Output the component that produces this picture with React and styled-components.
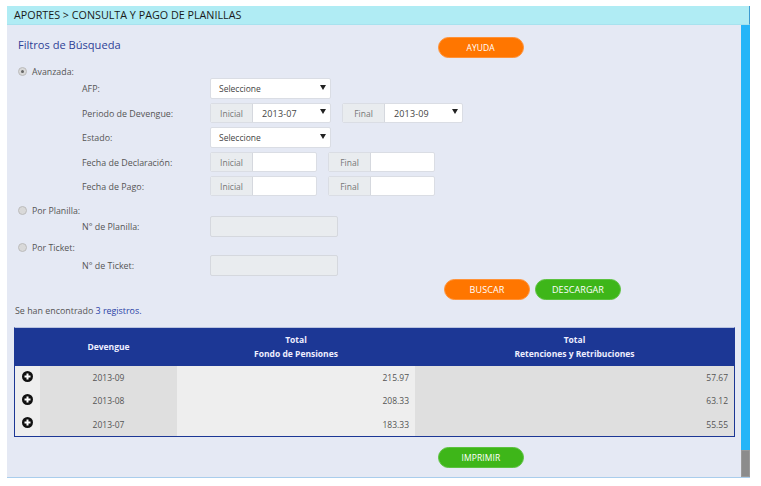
import React from "react";
import styled, { createGlobalStyle } from "styled-components";

const Global = createGlobalStyle`
  html, body { margin: 0; padding: 0; background: #fff; }
  body { font-family: "Open Sans", "Noto Sans", sans-serif; font-size: 9px; color: #444; }
  * { box-sizing: border-box; }
`;

const Page = styled.div`
  width: 761px; height: 486px; padding: 6px 11px 8px 7px;
`;
const Panel = styled.div`
  width: 743px; height: 472px; display: flex; flex-direction: column;
  border-bottom: 1px solid #a9cdec; background: #e5e9f4;
`;
const TopBar = styled.div`
  height: 19px; flex: none; background: #b0ecf4; color: #1a1a1a;
  font-size: 10.75px; line-height: 19px; padding-left: 7px;
  border-right: 1px solid #3d9ad1; border-bottom: 1px solid #a7e2ee;
`;
const Body = styled.div`
  flex: 1; display: flex; min-height: 0;
`;
const Content = styled.div`
  flex: 1; min-width: 0; padding: 0 0 0 7px; display: flex; flex-direction: column;
`;
const ScrollBar = styled.div`
  width: 9px; flex: none; display: flex; flex-direction: column;
  background: #25b5f8;
`;
const ScrollThumb = styled.div`
  margin-top: auto; height: 27px; background: #8c8c8c;
  border: 1px solid #9a9a9a;
`;
const TitleRow = styled.div`
  height: 32px; display: flex;
`;
const Title = styled.h2`
  margin: 0; padding: 12px 0 0 4px; font-weight: 400; font-size: 11.1px; line-height: 15px; color: #2e3f96;
`;
const Pill = styled.button`
  width: 86px; height: 21px; border-radius: 11px; padding: 0; font: inherit;
  font-size: 8.5px; color: #fff; letter-spacing: .1px;
  background: ${p => (p.$green ? "#3eb619" : "#ff7600")};
  border: 1px solid ${p => (p.$green ? "#5cc23f" : "#ff9238")};
`;
const HelpPill = styled(Pill)`
  margin: 12px 0 0 ${p => p.$left}px;
`;
const ActionPill = styled(Pill)`
  font-size: 9px;
`;
const RadioRow = styled.div`
  height: 12px; display: flex; align-items: center; gap: 5px; padding-left: 4px;
  margin-top: ${p => p.$mt || 0}px; font-size: 8.8px; color: #555;
`;
const RadioText = styled.span`
  padding-top: 2px;
`;
const Radio = styled.span`
  width: 9px; height: 9px; border-radius: 50%; flex: none; background: #d9d9d9;
  border: 1px solid #bcbcbc; display: flex; align-items: center; justify-content: center;
  &::after { content: ""; width: 3px; height: 3px; border-radius: 50%; background: ${p => (p.$on ? "#666" : "transparent")}; }
`;
const Field = styled.div`
  display: grid; grid-template-columns: 128px 1fr; align-items: center; padding-left: 68px;
  height: ${p => p.$h || 21}px; margin-top: ${p => p.$mt || 0}px;
`;
const FieldLabel = styled.label`
  font-size: 8.9px; color: #555;
`;
const Controls = styled.div`
  display: flex; align-items: stretch; height: 100%;
`;
const Group = styled.div`
  display: flex; width: ${p => p.$w}px; margin-right: ${p => p.$mr || 0}px; height: 100%;
  border-radius: 2px; border: 1px solid #dadde4; background: #fff; overflow: hidden;
`;
const Addon = styled.span`
  width: ${p => p.$w || 42}px; flex: none; background: #e9ecef; border-right: 1px solid #d5d8de;
  display: flex; align-items: center; justify-content: center; font-size: 8.5px; color: #777;
`;
const SelectBox = styled.div`
  flex: 1; display: flex; align-items: center; justify-content: space-between;
  padding: 0 4px 1px 8px; font-size: 8.5px; color: #444;
  svg { margin-bottom: 2px; }
`;
const DateValue = styled.span`
  font-size: 9px; letter-spacing: .15px; padding: 2px 0 0 1px;
`;
const Disabled = styled.div`
  width: 128px; height: 100%; background: #e9ecef; border: 1px solid #d5d8de; border-radius: 2px;
`;
const ActionRow = styled.div`
  display: flex; gap: 5px; padding-left: 430px; margin-top: 3px; height: 21px;
`;
const Found = styled.p`
  margin: 5px 0 0; height: 12px; line-height: 12px; font-size: 8.9px; color: #555; padding-left: 1px;
  strong { font-weight: 400; color: #2a3fa6; }
`;
const TableWrap = styled.div`
  margin: 10px 0 0 0; width: 721px; border: 1px solid #1c3795; border-top-color: #b9c3e0;
`;
const Table = styled.table`
  width: 100%; border-collapse: collapse; table-layout: fixed;
`;
const Head = styled.th`
  background: #1c3795; color: #eef; font-size: 8.5px; font-weight: 700; height: 38px; line-height: 14px;
  padding: 0; text-align: center;
`;
const Cell = styled.td`
  height: 23.3px; padding: 0 ${p => (p.$right ? 6 : 0)}px 0 0; font-size: 8.5px; color: #555;
  text-align: ${p => (p.$right ? "right" : "center")};
  background: ${p => (p.$dark ? "#dfdfdf" : "#eeeeee")};
`;
const PlusCell = styled(Cell)`
  svg { display: block; margin: -3px 0 0 7px; }
`;
const PrintRow = styled.div`
  padding-left: 424px; margin-top: 10px;
`;

const Arrow = () => (
  <svg width="6" height="5" viewBox="0 0 6 5"><path d="M0 0h6L3 5z" fill="#222" /></svg>
);
const Plus = () => (
  <svg width="11" height="11" viewBox="0 0 11 11">
    <circle cx="5.5" cy="5.5" r="5.5" fill="#111" />
    <path d="M5.5 2.5v6M2.5 5.5h6" stroke="#fff" strokeWidth="2" />
  </svg>
);

const Select = ({ w, mr, text, addon }) => (
  <Group $w={w} $mr={mr}>
    {addon && <Addon>{addon}</Addon>}
    <SelectBox>{addon ? <DateValue>{text}</DateValue> : text}<Arrow /></SelectBox>
  </Group>
);
const Range = ({ label, mr, w }) => (
  <Group $w={w} $mr={mr}>
    <Addon>{label}</Addon>
  </Group>
);

const rows = [
  ["2013-09", "215.97", "57.67"],
  ["2013-08", "208.33", "63.12"],
  ["2013-07", "183.33", "55.55"],
];

export default function App() {
  return (
    <Page>
      <Global />
      <Panel>
        <TopBar>APORTES &gt; CONSULTA Y PAGO DE PLANILLAS</TopBar>
        <Body>
          <Content>
            <TitleRow>
              <Title>Filtros de Búsqueda</Title>
              <HelpPill $left={317}>AYUDA</HelpPill>
            </TitleRow>
            <RadioRow $mt={8}><Radio $on /><RadioText>Avanzada:</RadioText></RadioRow>
            <Field $mt={1}>
              <FieldLabel>AFP:</FieldLabel>
              <Controls><Select w={121} text="Seleccione" /></Controls>
            </Field>
            <Field $mt={4} $h={20}>
              <FieldLabel>Periodo de Devengue:</FieldLabel>
              <Controls>
                <Select w={121} mr={11} addon="Inicial" text="2013-07" />
                <Select w={121} addon="Final" text="2013-09" />
              </Controls>
            </Field>
            <Field $mt={4}>
              <FieldLabel>Estado:</FieldLabel>
              <Controls><Select w={121} text="Seleccione" /></Controls>
            </Field>
            <Field $mt={4} $h={20}>
              <FieldLabel>Fecha de Declaración:</FieldLabel>
              <Controls>
                <Range label="Inicial" w={107} mr={11} />
                <Range label="Final" w={107} />
              </Controls>
            </Field>
            <Field $mt={4} $h={20}>
              <FieldLabel>Fecha de Pago:</FieldLabel>
              <Controls>
                <Range label="Inicial" w={107} mr={11} />
                <Range label="Final" w={107} />
              </Controls>
            </Field>
            <RadioRow $mt={8}><Radio /><RadioText>Por Planilla:</RadioText></RadioRow>
            <Field>
              <FieldLabel>N° de Planilla:</FieldLabel>
              <Controls><Disabled /></Controls>
            </Field>
            <RadioRow $mt={4}><Radio /><RadioText>Por Ticket:</RadioText></RadioRow>
            <Field $mt={2}>
              <FieldLabel>N° de Ticket:</FieldLabel>
              <Controls><Disabled /></Controls>
            </Field>
            <ActionRow>
              <ActionPill>BUSCAR</ActionPill>
              <ActionPill $green>DESCARGAR</ActionPill>
            </ActionRow>
            <Found>Se han encontrado <strong>3 registros.</strong></Found>
            <TableWrap>
              <Table>
                <colgroup>
                  <col style={{ width: 25 }} />
                  <col style={{ width: 137 }} />
                  <col style={{ width: 238 }} />
                  <col />
                </colgroup>
                <thead>
                  <tr>
                    <Head />
                    <Head>Devengue</Head>
                    <Head>Total<br />Fondo de Pensiones</Head>
                    <Head>Total<br />Retenciones y Retribuciones</Head>
                  </tr>
                </thead>
                <tbody>
                  {rows.map(r => (
                    <tr key={r[0]}>
                      <PlusCell><Plus /></PlusCell>
                      <Cell $dark>{r[0]}</Cell>
                      <Cell $right>{r[1]}</Cell>
                      <Cell $right $dark>{r[2]}</Cell>
                    </tr>
                  ))}
                </tbody>
              </Table>
            </TableWrap>
            <PrintRow><Pill $green>IMPRIMIR</Pill></PrintRow>
          </Content>
          <ScrollBar><ScrollThumb /></ScrollBar>
        </Body>
      </Panel>
    </Page>
  );
}
